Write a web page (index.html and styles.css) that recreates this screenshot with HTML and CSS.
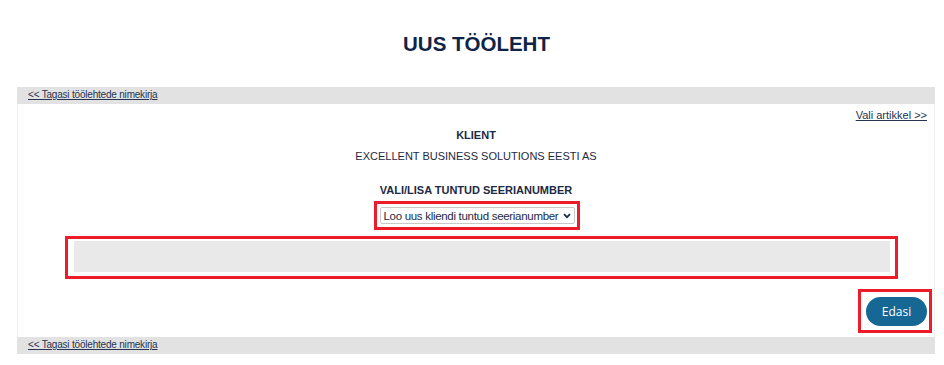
FILE: index.html
```html
<!DOCTYPE html>
<html lang="et">
<head>
    <meta charset="UTF-8">
    <meta name="viewport" content="width=device-width, initial-scale=1.0">
    <title>Uus tööleht</title>
    <link rel="stylesheet" href="styles.css">
</head>
<body>

<h1 class="pealkiri">UUS TÖÖLEHT</h1>

<div class="toolehe-konteiner">
    <div class="riba">
        <a href="#">&lt;&lt; Tagasi töölehtede nimekirja</a>
    </div>

    <div class="sisu">
        <div class="artikkel-link">
            <a href="#">Vali artikkel &gt;&gt;</a>
        </div>

        <div class="silt klient-silt">KLIENT</div>
        <div class="klient-nimi">EXCELLENT BUSINESS SOLUTIONS EESTI AS</div>

        <div class="silt seeria-silt">VALI/LISA TUNTUD SEERIANUMBER</div>
        <div class="valik-rida">
            <span class="esiletoos valik-raam">
                <span class="valik-kest">
                    <select class="seeria-valik">
                        <option>Loo uus kliendi tuntud seerianumber</option>
                    </select>
                    <svg class="noolike" width="8" height="6" viewBox="0 0 8 6">
                        <path d="M1 1.2 L4 4.2 L7 1.2" fill="none" stroke="#1c2a44" stroke-width="1.8"/>
                    </svg>
                </span>
            </span>
        </div>

        <div class="esiletoos hall-raam">
            <div class="hall-kast"></div>
        </div>

        <div class="nupu-rida">
            <span class="esiletoos nupu-raam">
                <button class="edasi">Edasi</button>
            </span>
        </div>
    </div>

    <div class="riba">
        <a href="#">&lt;&lt; Tagasi töölehtede nimekirja</a>
    </div>
</div>

</body>
</html>
```

FILE: styles.css
```css
body {
    margin: 0;
    font-family: "Liberation Sans", Arial, sans-serif;
    color: #1c2a44;
    background: white;
}

.pealkiri {
    margin: 0;
    padding-top: 33px;
    padding-left: 9px;
    height: 54px;
    text-align: center;
    font-size: 20.5px;
    line-height: 22px;
    color: #0f2447;
}

.toolehe-konteiner {
    margin-left: 17px;
    width: 918px;
}

.riba {
    background-color: #e2e2e2;
    height: 17px;
    padding-left: 11px;
    font-size: 10px;
    letter-spacing: -0.2px;
    line-height: 16px;
}

.riba a,
.artikkel-link a {
    color: #26344f;
}

.sisu {
    border-left: 1px solid #f0f0f0;
    border-right: 1px solid #f0f0f0;
    padding-top: 4px;
    padding-bottom: 4px;
}

.artikkel-link {
    text-align: right;
    padding-right: 7px;
    font-size: 11px;
    line-height: 15px;
}

.silt {
    text-align: center;
    font-weight: bold;
    font-size: 11px;
    line-height: 13px;
}

.klient-silt {
    margin-top: 6px;
}

.klient-nimi {
    text-align: center;
    font-size: 11px;
    line-height: 13px;
    margin-top: 8px;
}

.seeria-silt {
    margin-top: 21px;
}

.valik-rida {
    text-align: center;
    margin-top: 4px;
    height: 32px;
}

.esiletoos {
    border: 3px solid #ec1c2a;
}

.valik-raam {
    display: inline-block;
    padding: 3px 2px 3px 3px;
    margin-left: 1px;
}

.valik-kest {
    position: relative;
    display: block;
}

.seeria-valik {
    appearance: none;
    -webkit-appearance: none;
    font-family: "Liberation Sans", Arial, sans-serif;
    font-size: 11.5px;
    letter-spacing: -0.3px;
    height: 17px;
    width: 195px;
    padding: 0 12px 0 3px;
    color: #1c2a44;
    border: 1px solid #c8c8c8;
    border-radius: 2px;
    background: white;
    display: block;
    text-align: left;
}

.noolike {
    position: absolute;
    right: 4px;
    top: 6px;
    pointer-events: none;
}

.hall-raam {
    margin: 3px 36px 0 47px;
    padding: 2px 5px 4px 6px;
}

.hall-kast {
    background-color: #e9e9e9;
    height: 31px;
}

.nupu-rida {
    display: flex;
    justify-content: flex-end;
    margin-top: 10px;
    padding-right: 2px;
}

.nupu-raam {
    display: inline-block;
    padding: 5px 2px 4px 5px;
}

.edasi {
    display: block;
    width: 61px;
    height: 29px;
    border: none;
    border-radius: 15px;
    background-color: #176795;
    color: white;
    font-family: "Open Sans", sans-serif;
    font-size: 12px;
    cursor: pointer;
}
```
